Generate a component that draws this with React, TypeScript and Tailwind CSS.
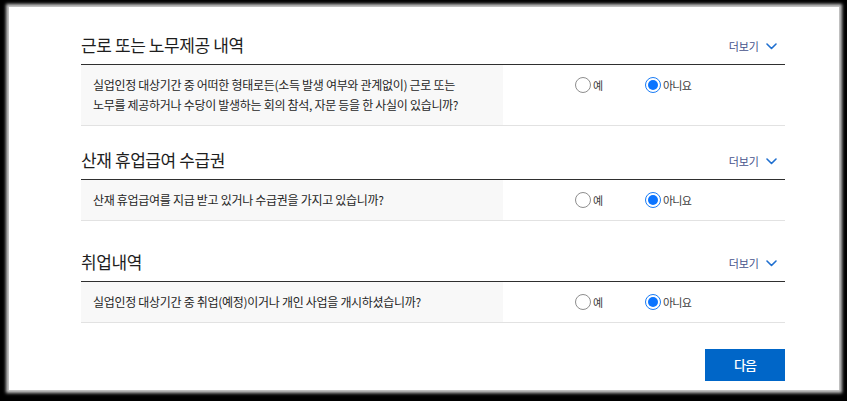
import React from "react";

type Section = {
    title: string;
    question: React.ReactNode;
    gap: string;
};

const sections: Section[] = [
    {
        title: "근로 또는 노무제공 내역",
        question: (
            <>
                실업인정 대상기간 중 어떠한 형태로든(소득 발생 여부와 관계없이) 근로 또는
                <br />
                노무를 제공하거나 수당이 발생하는 회의 참석, 자문 등을 한 사실이 있습니까?
            </>
        ),
        gap: "mt-0",
    },
    {
        title: "산재 휴업급여 수급권",
        question: "산재 휴업급여를 지급 받고 있거나 수급권을 가지고 있습니까?",
        gap: "mt-[22px]",
    },
    {
        title: "취업내역",
        question: "실업인정 대상기간 중 취업(예정)이거나 개인 사업을 개시하셨습니까?",
        gap: "mt-[29px]",
    },
];

function Radio({ checked, label }: { checked?: boolean; label: string }) {
    return (
        <label className="flex items-center gap-[2px] h-5">
            {checked ? (
                <span className="w-4 h-4 rounded-full border border-[#1a7cf5] flex items-center justify-center bg-white">
                    <span className="w-[10px] h-[10px] rounded-full bg-[#0a74ff]" />
                </span>
            ) : (
                <span className="w-4 h-4 rounded-full border border-[#8e8e8e] bg-white" />
            )}
            <span className="text-[11px] tracking-[-0.8px] text-[#3a3a3a]">{label}</span>
        </label>
    );
}

function Chevron() {
    return (
        <svg width="11" height="7" viewBox="0 0 11 7" fill="none">
            <polyline
                points="1,1 5.5,5.5 10,1"
                stroke="#1f6fd0"
                strokeWidth="1.6"
                strokeLinecap="round"
                strokeLinejoin="round"
            />
        </svg>
    );
}

function QuestionBlock({ s }: { s: Section }) {
    return (
        <div className={s.gap}>
            <div className="h-8 flex items-start justify-between border-b border-[#2f2f2f]">
                <h2 className="text-[17px] leading-6 tracking-[-0.4px] text-[#1e1e1e]">{s.title}</h2>
                <button className="flex items-center gap-[7px] h-6 pt-[2px] mr-[8px] text-[11px] text-[#46528c]">
                    더보기
                    <Chevron />
                </button>
            </div>
            <div className="flex border-b border-[#e2e2e2]">
                <div className="w-[422px] bg-[#f8f8f8] pl-3 py-[10px] text-[12px] leading-5 tracking-[-0.3px] text-[#262626]">
                    {s.question}
                </div>
                <div className="flex pl-[72px] py-[10px]">
                    <div className="w-[70px]">
                        <Radio label="예" />
                    </div>
                    <Radio checked label="아니요" />
                </div>
            </div>
        </div>
    );
}

export default function App() {
    return (
        <div className="w-[847px] h-[401px] bg-black pt-[7px] pl-[9px] font-['Noto_Sans_CJK_KR','Noto_Sans',sans-serif]">
            <div className="w-[830px] h-[383px] bg-white shadow-[0_0_3px_3px_#c9c9c9] pl-[72px] pt-[26px]">
                <div className="w-[704px]">
                    {sections.map((s) => (
                        <QuestionBlock key={s.title} s={s} />
                    ))}
                    <div className="flex justify-end mt-[26px]">
                        <button className="w-20 h-8 bg-[#0066c8] text-white text-[13px] font-medium tracking-[-1px]">
                            다음
                        </button>
                    </div>
                </div>
            </div>
        </div>
    );
}
